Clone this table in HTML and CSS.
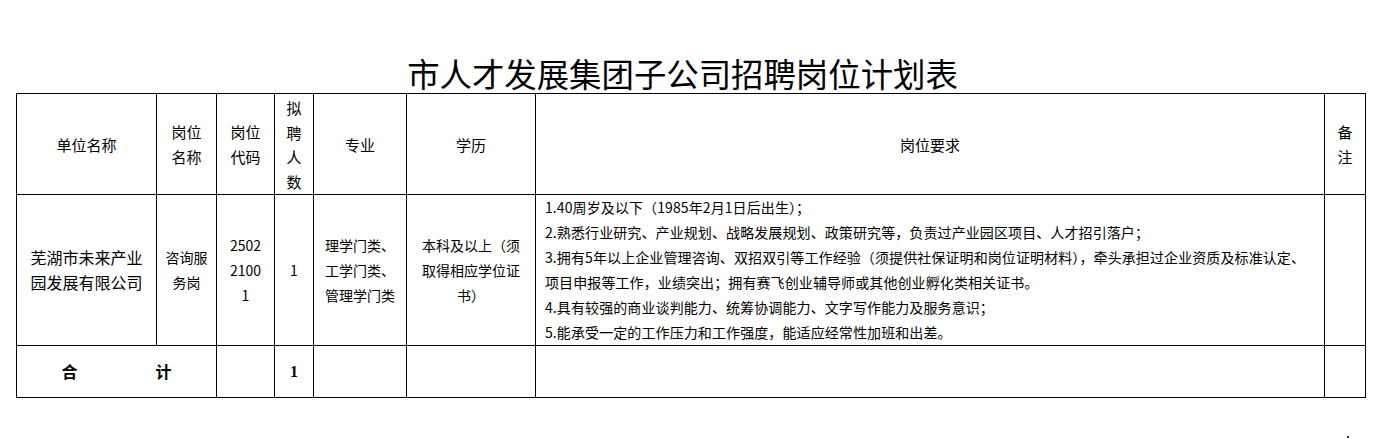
FILE: index.html
```html
<!DOCTYPE html>
<html lang="zh-CN">
<head>
<meta charset="utf-8">
<title>市人才发展集团子公司招聘岗位计划表</title>
<link rel="stylesheet" href="styles.css">
</head>
<body>
<div class="page">
  <h1 class="title">市人才发展集团子公司招聘岗位计划表</h1>
  <table class="plan">
    <colgroup>
      <col class="c-unit">
      <col class="c-post">
      <col class="c-code">
      <col class="c-num">
      <col class="c-major">
      <col class="c-edu">
      <col class="c-req">
      <col class="c-note">
    </colgroup>
    <thead>
      <tr class="head-row">
        <th>单位名称</th>
        <th>岗位<br>名称</th>
        <th>岗位<br>代码</th>
        <th class="num-head">拟<br>聘<br>人<br>数</th>
        <th>专业</th>
        <th>学历</th>
        <th>岗位要求</th>
        <th>备<br>注</th>
      </tr>
    </thead>
    <tbody>
      <tr class="body-row">
        <td class="unit">芜湖市未来产业<br>园发展有限公司</td>
        <td class="small">咨询服<br>务岗</td>
        <td class="small">2502<br>2100<br>1</td>
        <td class="small">1</td>
        <td class="small">理学门类、<br>工学门类、<br>管理学门类</td>
        <td class="small">本科及以上（须<br>取得相应学位证<br>书）</td>
        <td class="req">
          <p>1.40周岁及以下（1985年2月1日后出生）；</p>
          <p>2.熟悉行业研究、产业规划、战略发展规划、政策研究等，负责过产业园区项目、人才招引落户；</p>
          <p>3.拥有5年以上企业管理咨询、双招双引等工作经验（须提供社保证明和岗位证明材料），牵头承担过企业资质及标准认定、</p>
          <p>项目申报等工作，业绩突出；拥有赛飞创业辅导师或其他创业孵化类相关证书。</p>
          <p>4.具有较强的商业谈判能力、统筹协调能力、文字写作能力及服务意识；</p>
          <p>5.能承受一定的工作压力和工作强度，能适应经常性加班和出差。</p>
        </td>
        <td></td>
      </tr>
      <tr class="total-row">
        <td colspan="2" class="total-label"><span>合</span><span>计</span></td>
        <td></td>
        <td class="total-num">1</td>
        <td></td>
        <td></td>
        <td></td>
        <td></td>
      </tr>
    </tbody>
  </table>
  <span class="dot"></span>
</div>
</body>
</html>
```
FILE: styles.css
```css
html, body {
  margin: 0;
  padding: 0;
  background: #fff;
}

body {
  font-family: "Noto Sans CJK SC", "Noto Sans", sans-serif;
  color: #000;
}

.page {
  position: relative;
  width: 1392px;
  height: 439px;
  padding: 53px 0 0 16px;
  box-sizing: border-box;
}

.title {
  margin: 0;
  width: 1349px;
  padding-right: 16px;
  box-sizing: border-box;
  text-align: center;
  font-size: 32.4px;
  font-weight: 400;
  line-height: 40px;
  height: 40px;
}

.plan {
  border-collapse: collapse;
  table-layout: fixed;
  width: 1349px;
}

.plan th,
.plan td {
  border: 1px solid #000;
  padding: 0;
  text-align: center;
  vertical-align: middle;
  line-height: 25px;
}

.c-unit { width: 140px; }
.c-post { width: 60px; }
.c-code { width: 58px; }
.c-num { width: 39px; }
.c-major { width: 93px; }
.c-edu { width: 129px; }
.c-req { width: 789px; }
.c-note { width: 41px; }

.head-row {
  height: 101px;
}

.head-row th {
  font-size: 15px;
  font-weight: 400;
}

.head-row th.num-head {
  padding-top: 2px;
  line-height: 24.5px;
}

.body-row {
  height: 151px;
}

.unit {
  font-size: 16px;
}

.small {
  font-size: 14px;
}

.req {
  text-align: left !important;
  padding-left: 9px !important;
  font-size: 14px;
  white-space: nowrap;
  letter-spacing: 0.1px;
}

.req p {
  margin: 0;
  line-height: 25px;
}

.total-row {
  height: 52px;
}

.total-label {
  font-size: 16px;
  font-weight: 700;
}

.total-label span + span {
  margin-left: 78px;
}

.total-num {
  font-family: "Liberation Serif", serif;
  font-size: 16px;
  font-weight: 700;
}

.dot {
  position: absolute;
  left: 1347px;
  top: 436px;
  width: 2px;
  height: 2px;
  background: #333;
}
```
